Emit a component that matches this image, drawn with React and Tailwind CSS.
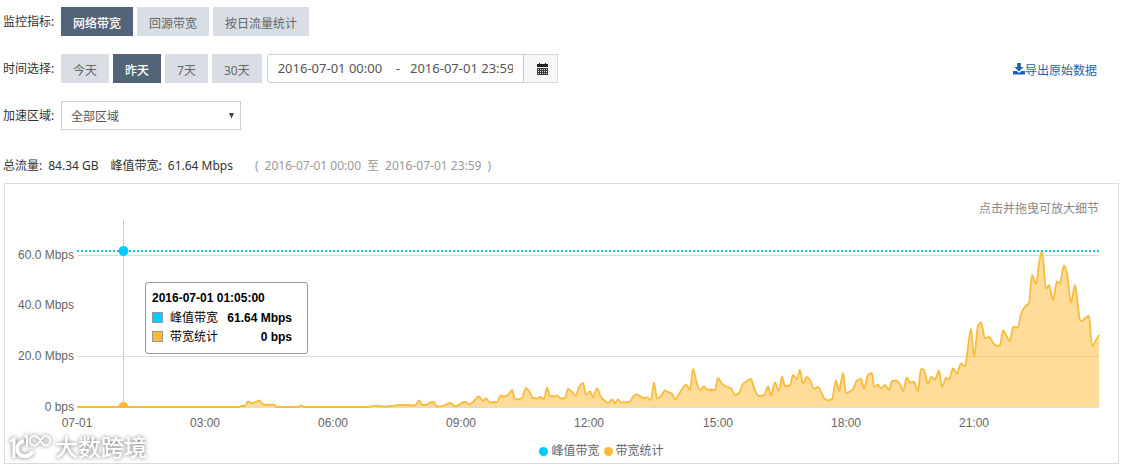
import React, { useState } from 'react'
import clsx from 'clsx'

const METRICS = ['网络带宽', '回源带宽', '按日流量统计']
const RANGES = ['今天', '昨天', '7天', '30天']

const PLOT = { left: 77, right: 1099, top: 220, base: 407 }

const Y_TICKS = [
  { y: 255, label: '60.0 Mbps', line: true },
  { y: 305, label: '40.0 Mbps', line: false },
  { y: 356, label: '20.0 Mbps', line: true },
  { y: 407, label: '0 bps', line: true }
]

const X_TICKS = [
  { x: 77, label: '07-01' },
  { x: 205, label: '03:00' },
  { x: 333, label: '06:00' },
  { x: 461, label: '09:00' },
  { x: 589, label: '12:00' },
  { x: 718, label: '15:00' },
  { x: 846, label: '18:00' },
  { x: 974, label: '21:00' }
]

// x, y in chart units, baseline at 407
const TRACE = `
77,407 238,407 242,406 245,406 248,401.5 252,403 256,402 259,400.5 263,404 266,405 270,405 273,404.5 277,407
298,407 301,405.5 304,407 366,407 371,406.5 376,405.7 385,406.7 392,406 400,405 408,405 415,405.5 417,403
419,400.3 422,405 426,405 430,402.5 434,402 436,406 440,406.5 445,405 450,403 452,403.5 454,406 458,405.5
464,402 466,402 469,404.5 473,402 479,396.3 483,401 486,398.5 490,402.5 497,402 501,395.5 504,396.5 508,395
512,390 515,398.5 519,399.3 522,398 526,388 529,391 533,398 537,398.3 540,397 544,399 547,387.3 550,396
554,396.5 557,395.3 561,398.5 565,398 568,389 572,392 576,395.5 579,387 583,383 586,395 590,391.5 593,397
597,388.3 601,397 605,401 608,403 612,399.5 615,403.3 618,399.5 621,402.3 629,402 633,397 636,394.5 640,396
644,398 647,397.3 651,400 654,382.5 657,398.5 661,396 665,390.3 668,392 672,394 675,399.5 679,394 683,388
686,384.3 690,390 693,369 697,384 700,390 704,386.5 707,389.5 715,390 718,378 722,384 726,386.5 731,388
735,395 739,393 743,384 747,381 751,379 754,388 759,396 764,395.5 768,386.5 771,395.5 775,382.5 779,391
782,376.5 785,386 790,385.5 793,375 797,379 800,370 803,383.5 807,377 810,380 814,389 818,387 821,392
825,399 829,400.3 832,399 836,380.5 839,391 843,373 846,393 850,391.5 853,389 857,380.5 861,379 864,388.5
868,375 872,373 874,387 878,384.7 881,388.5 885,385 889,390 892,381 896,380.5 900,384 903,391 907,377.5
910,382.5 914,382 918,391 921,369 924,370 928,384 931,377 935,379.5 939,370.5 942,387 946,378 949,379
953,368.5 957,373.5 961,363.5 965,366.5 967,355 971,329 974,357 978,326 981,322.5 985,338 989,337 994,344
998,346 1000,345 1003,330.5 1007,337 1010,341 1013,327 1018,327.5 1021,314 1025,306.5 1029,303 1032,275
1036,284 1039,264 1042,251 1046,289 1049,285 1053,300 1057,281.5 1060,283 1064,265.5 1067,273 1071,302.5
1075,285 1078,306 1080,320 1082,321 1085,318 1089,316 1092,346 1096,340 1099,335`

const points = TRACE.trim().split(/\s+/).map((p) => p.split(',').map(Number))

// monotone cubic, so the curve never overshoots a sample
const smoothPath = (pts) => {
  const slopes = []
  for (let i = 0; i < pts.length - 1; i++) {
    slopes.push((pts[i + 1][1] - pts[i][1]) / (pts[i + 1][0] - pts[i][0]))
  }
  const tangents = pts.map((_, i) => {
    if (i === 0) return slopes[0]
    if (i === pts.length - 1) return slopes[i - 1]
    const a = slopes[i - 1]
    const b = slopes[i]
    return a * b <= 0 ? 0 : (2 * a * b) / (a + b)
  })
  let d = `M${pts[0][0]} ${pts[0][1]}`
  for (let i = 0; i < pts.length - 1; i++) {
    const [x0, y0] = pts[i]
    const [x1, y1] = pts[i + 1]
    const h = (x1 - x0) / 3
    d += `C${x0 + h} ${y0 + tangents[i] * h} ${x1 - h} ${y1 - tangents[i + 1] * h} ${x1} ${y1}`
  }
  return d
}

const linePath = smoothPath(points)
const areaPath = `${linePath}L${PLOT.right} ${PLOT.base}L${PLOT.left} ${PLOT.base}Z`

const ButtonRow = ({ label, items, active, onSelect, children }) => (
  <div className="flex items-center">
    <span className="w-[58px] shrink-0">{label}</span>
    <div className="flex gap-1">
      {items.map((item) => (
        <button
          key={item}
          type="button"
          onClick={() => onSelect(item)}
          className={clsx(
            'h-[29px] px-3 pt-1 whitespace-nowrap',
            item === active ? 'bg-[#546478] text-white font-medium' : 'bg-[#d9dee4] text-[#666]'
          )}
        >
          {item}
        </button>
      ))}
    </div>
    {children}
  </div>
)

const CalendarIcon = () => (
  <svg width="11" height="12" viewBox="0 0 11 12" aria-hidden="true">
    <path d="M0 1h11v3H0zM2 0h1v2H2zM8 0h1v2H8z" fill="#222" />
    <path d="M0 5h11v7H0z" fill="#3a3340" />
    <path
      d="M1 6h1v1H1zM3 6h1v1H3zM5 6h1v1H5zM7 6h1v1H7zM9 6h1v1H9zM1 8h1v1H1zM3 8h1v1H3zM5 8h1v1H5zM7 8h1v1H7zM9 8h1v1H9zM1 10h1v1H1zM3 10h1v1H3zM5 10h1v1H5zM7 10h1v1H7zM9 10h1v1H9z"
      fill="#ddd"
    />
  </svg>
)

const DownloadIcon = () => (
  <svg width="12" height="12" viewBox="0 0 12 12" fill="currentColor" aria-hidden="true">
    <path d="M4.2 0h3.6v4h2.7L6 8.4 1.5 4h2.7z" />
    <path d="M0 8h3.6L6 10.1 8.4 8H12v3.4H0z" />
  </svg>
)

const Chart = () => (
  <svg viewBox="5 219 1113 222" className="block w-full" role="img" aria-label="带宽统计">
    {Y_TICKS.map((t) => (
      <g key={t.label}>
        {t.line && (
          <path d={`M${PLOT.left} ${t.y + 0.5}H${PLOT.right}`} stroke="#dcdcdc" strokeWidth="1" />
        )}
        <text x="74" y={t.y + 4} textAnchor="end" fontSize="12" fill="#666">{t.label}</text>
      </g>
    ))}
    {X_TICKS.map((t) => (
      <text key={t.label} x={t.x} y="427" textAnchor="middle" fontSize="12" fill="#666">{t.label}</text>
    ))}
    <path d="M123.5 220V407" stroke="#ccc" strokeWidth="1" />
    <path d={areaPath} fill="#ffb935" fillOpacity=".5" />
    <path d={linePath} fill="none" stroke="#f9bb3c" strokeWidth="1.8" strokeLinejoin="round" />
    <path d="M77 251H1099" stroke="#1fbfe8" strokeWidth="2" strokeDasharray="2 2" />
    <circle cx="123.5" cy="251" r="5" fill="#0cf" />
    <path d="M118.5 407a5 5 0 0 1 10 0z" fill="#ffb935" />
  </svg>
)

const TooltipRow = ({ swatch, name, value }) => (
  <div className="flex items-center h-[19px]">
    <span className={clsx('w-[11px] h-[11px] border border-[#999]', swatch)} />
    <span className="ml-[7px]">{name}</span>
    <span className="ml-auto font-bold">{value}</span>
  </div>
)

const Watermark = () => (
  <div className="absolute left-1 bottom-0 flex items-center gap-1 drop-shadow-[0_0_2px_rgba(0,0,0,0.55)]">
    <svg width="42" height="30" viewBox="0 0 42 30" fill="none" stroke="#fff" aria-hidden="true">
      <path d="M1 9.5l4-2.5v19" strokeWidth="3" />
      <path d="M15 9c-5 1-7.500 5-6.500 9.500 1.500 7 11 8 15 1" strokeWidth="4" />
      <path d="M15.500 5l2.500-1.500v11" strokeWidth="2" />
      <path
        d="M31.500 8.500c-2-3-4-4.500-6.200-4.500a4.700 4.700 0 0 0 0 9.400c2.200 0 4.200-1.900 6.200-4.900s3.200-4.500 5-4.500a4.700 4.700 0 0 1 0 9.400c-1.800 0-3.400-1.900-5-4.900z"
        strokeWidth="2"
      />
    </svg>
    <span className="text-[23px] leading-8 font-medium text-white">大数跨境</span>
  </div>
)

const App = () => {
  const [metric, setMetric] = useState('网络带宽')
  const [range, setRange] = useState('昨天')
  const [period, setPeriod] = useState('2016-07-01 00:00\u00a0\u00a0\u00a0\u00a0-\u00a0\u00a0\u00a02016-07-01 23:59')

  return (
    <div className="bg-white pt-[7px] pl-[3px] pr-[2px] pb-1 text-xs text-[#333] font-['Noto_Sans','Noto_Sans_CJK_SC',sans-serif]">
      <div className="flex flex-col gap-[18px]">
        <ButtonRow label="监控指标:" items={METRICS} active={metric} onSelect={setMetric} />

        <ButtonRow label="时间选择:" items={RANGES} active={range} onSelect={setRange}>
          <div className="flex ml-[5px] h-[29px]">
            <input
              type="text"
              aria-label="时间范围"
              value={period}
              onChange={(e) => setPeriod(e.target.value)}
              className="w-[257px] px-[10px] border border-[#ccc] rounded-l-[3px] text-[13px] text-[#555]"
            />
            <button
              type="button"
              aria-label="选择日期"
              className="w-[35px] -ml-px flex items-center justify-center pl-1 bg-[#f7f7f7] border border-[#d9d9d9] border-l-[#ccc]"
            >
              <CalendarIcon />
            </button>
          </div>
          <a href="#export" className="ml-auto mr-[22px] pt-1 flex items-start text-[#1663b8]">
            <DownloadIcon />
            导出原始数据
          </a>
        </ButtonRow>

        <div className="flex items-center">
          <label htmlFor="region" className="w-[58px]">加速区域:</label>
          <div className="relative">
            <select
              id="region"
              className="appearance-none w-[180px] h-[29px] px-[9px] pt-0.5 bg-white border border-[#ccc] text-[#555]"
            >
              <option>全部区域</option>
            </select>
            <svg width="5" height="6" viewBox="0 0 5 6" className="absolute right-[7px] top-3 pointer-events-none" aria-hidden="true">
              <path d="M0 0h5L2.500 5.500z" fill="#444" />
            </svg>
          </div>
        </div>
      </div>

      <div className="mt-[26px] flex leading-5">
        <p className="flex gap-1.5">
          <span>总流量:</span>
          <span>84.34 GB</span>
        </p>
        <p className="ml-3 flex gap-1.5">
          <span>峰值带宽:</span>
          <span>61.64 Mbps</span>
        </p>
        <p className="ml-[22px] flex gap-1.5 text-[#999]">
          <span>(</span>
          <span>2016-07-01 00:00</span>
          <span>至</span>
          <span>2016-07-01 23:59</span>
          <span>)</span>
        </p>
      </div>

      <div className="relative mt-[7px] ml-px pt-[15px] pb-0.5 border border-[#d9dcde]">
        <div className="pr-[19px] text-right leading-5 text-[#888]">点击并拖曳可放大细节</div>
        <div className="relative font-['Liberation_Sans','Noto_Sans_CJK_SC',sans-serif]">
          <Chart />
          <div className="absolute left-[140px] top-[63px] w-[163px] pl-1.5 pr-[15px] pt-1.5 pb-[7px] bg-white border border-[#999] rounded-[3px] text-black">
            <div className="h-[19px] leading-[19px] font-bold">2016-07-01 01:05:00</div>
            <TooltipRow swatch="bg-[#0cf]" name="峰值带宽" value="61.64 Mbps" />
            <TooltipRow swatch="bg-[#ffb935]" name="带宽统计" value="0 bps" />
          </div>
        </div>
        <div className="flex justify-center gap-1 pl-20 leading-5 text-[#666]">
          <span className="flex items-center gap-[3px]">
            <i className="w-[9px] h-[9px] rounded-full bg-[#0cf]" />
            峰值带宽
          </span>
          <span className="flex items-center gap-[3px]">
            <i className="w-[9px] h-[9px] rounded-full bg-[#ffb935]" />
            带宽统计
          </span>
        </div>
        <Watermark />
      </div>
    </div>
  )
}

export default App
